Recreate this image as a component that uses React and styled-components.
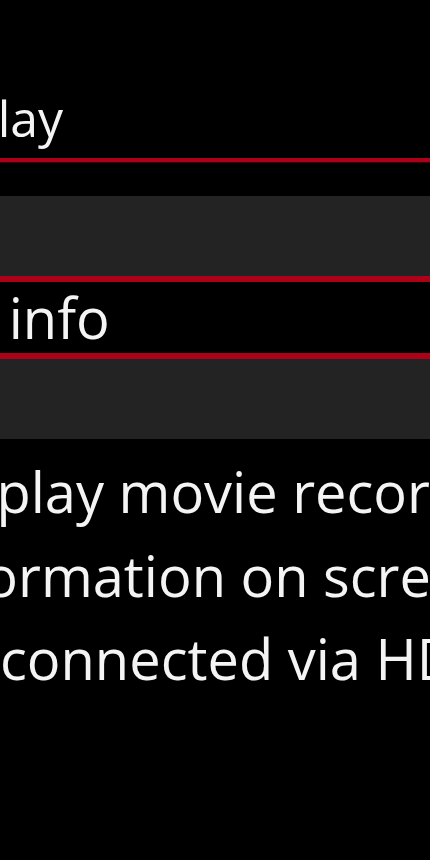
import React from 'react';
import styled, { createGlobalStyle } from 'styled-components';

const GlobalStyle = createGlobalStyle`
    html, body {
        margin: 0;
        padding: 0;
        background: #000;
    }
    body {
        font-family: "Open Sans", "Noto Sans", sans-serif;
        color: #f4f4f4;
    }
`;

const menuRed = '#ad0019';

const App = () => {
    return (
        <>
            <GlobalStyle />
            <Screen>
                <Title>
                    <Label shift={-245}>HDMI display</Label>
                </Title>

                <Options>
                    <Option />
                    <Option selected>
                        <Label shift={-126}>With info</Label>
                    </Option>
                    <Option />
                </Options>

                <Help>
                    <Line shift={-85}>Display movie recording</Line>
                    <Line shift={-83}>information on screen when</Line>
                    <Line shift={0}>connected via HDMI</Line>
                </Help>
            </Screen>
        </>
    );
}

const Screen = styled.div`
    width: 430px;
    height: 860px;
    overflow: hidden;
    background: #000;
    display: flex;
    flex-direction: column;
    padding-top: 89px;
    box-sizing: border-box;
`;

const Title = styled.div`
    height: 69px;
    font-size: 50px;
    line-height: 59px;
    overflow: hidden;
    border-bottom: 4px solid ${menuRed};
    box-shadow: 0 1px 0 #3a0008;
`;

const Label = styled.span`
    display: block;
    white-space: nowrap;
    margin-left: ${props => props.shift}px;
`;

const Options = styled.div`
    display: flex;
    flex-direction: column;
    margin-top: 34px;
`;

const Option = styled.div`
    height: ${props => (props.selected) ? '71px' : '80px'};
    background: ${props => (props.selected) ? '#000' : '#232323'};
    border-top: ${props => (props.selected) ? `6px solid ${menuRed}` : 'none'};
    border-bottom: ${props => (props.selected) ? `6px solid ${menuRed}` : 'none'};
    font-size: 56px;
    line-height: 71px;
    overflow: hidden;
`;

const Help = styled.div`
    display: flex;
    flex-direction: column;
    padding-top: 11px;
    font-size: 56px;
    line-height: 83.5px;
    overflow: hidden;
`;

const Line = styled.div`
    white-space: nowrap;
    margin-left: ${props => props.shift}px;
`;

export default App;
